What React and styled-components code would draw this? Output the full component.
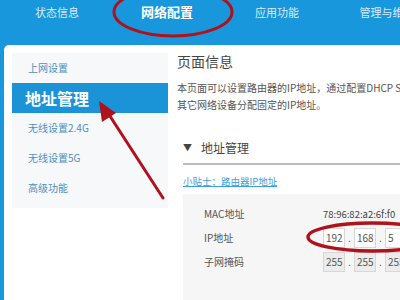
import React from 'react';
import styled, { createGlobalStyle } from 'styled-components';

const Global = createGlobalStyle`
	html, body { margin: 0; padding: 0; }
	body {
		font-family: "Noto Sans CJK SC", "Noto Sans", sans-serif;
		background: #1897dc;
	}
`;

const Page = styled.div`
	position: relative;
	width: 400px;
	height: 300px;
	overflow: hidden;
	background: #1897dc;
	display: flex;
	flex-direction: column;
`;

const Nav = styled.div`
	display: flex;
	height: 45px;
	padding-left: 2px;
	flex-shrink: 0;
`;

const Tab = styled.div`
	width: 110px;
	flex-shrink: 0;
	text-align: center;
	padding-top: 2px;
	line-height: 20px;
	font-size: ${({ active }) => active ? '13px' : '11px'};
	font-weight: ${({ active }) => active ? 'bold' : 'normal'};
	color: ${({ active }) => active ? '#fff' : '#d8ecf8'};
	white-space: nowrap;
`;

const Panel = styled.div`
	flex: 1;
	margin-left: 4px;
	background: #fff;
	border-top-left-radius: 5px;
	display: flex;
	padding: 8px 0 0 8px;
`;

const Sidebar = styled.div`
	width: 156px;
	height: 155px;
	flex-shrink: 0;
	background: #f7f8fa;
	box-sizing: border-box;
`;

const SideItem = styled.div`
	height: 30px;
	line-height: 30px;
	padding-left: ${({ active }) => active ? '13px' : '16px'};
	font-size: ${({ active }) => active ? '16px' : '10px'};
	font-weight: ${({ active }) => active ? 'bold' : 'normal'};
	color: ${({ active }) => active ? '#fff' : '#4f8ec2'};
	background: ${({ active }) => active ? '#1b93d7' : 'transparent'};
`;

const Main = styled.div`
	flex: 1;
	padding-left: 9px;
	min-width: 0;
	display: flex;
	flex-direction: column;
`;

const Title = styled.div`
	font-size: 14px;
	color: #444;
	line-height: 20px;
	margin-top: -2px;
`;

const Para = styled.div`
	font-size: 10px;
	color: #555;
	line-height: 17px;
	margin-top: 8px;
	white-space: nowrap;
`;

const Section = styled.div`
	display: flex;
	align-items: center;
	gap: 9px;
	margin-top: 27px;
	margin-left: 6px;
	font-size: 12px;
	color: #444;
	line-height: 16px;
	& > span:first-child { font-size: 9px; }
`;

const Rule = styled.div`
	height: 2px;
	background: #bdbdbd;
	margin: 7px 0 0 6px;
`;

const Tip = styled.a`
	margin: 9px 0 0 6px;
	font-size: 9.5px;
	color: #3aa0dc;
	text-decoration: underline;
	line-height: 14px;
`;

const InfoBox = styled.div`
	flex: 1;
	margin: 6px 0 0 6px;
	background: #f6f6f6;
	padding: 9px 0 0 21px;
	display: flex;
	flex-direction: column;
	gap: 3px;
`;

const Row = styled.div`
	display: flex;
	align-items: center;
	height: 21px;
	font-size: 10px;
	color: #555;
`;

const Label = styled.div`
	width: 119px;
	flex-shrink: 0;
`;

const Value = styled.div`
	font-size: 9.5px;
	color: #444;
`;

const Octets = styled.div`
	display: flex;
	align-items: center;
`;

const Octet = styled.div`
	width: 22px;
	height: 20px;
	box-sizing: border-box;
	border: 1px solid #d7d7d7;
	background: ${({ disabled }) => disabled ? '#ececec' : '#fff'};
	font-size: 10px;
	line-height: 18px;
	padding-left: 2px;
	color: #555;
`;

const Dot = styled.span`
	width: 9px;
	text-align: center;
	font-size: 10px;
	color: #555;
`;

const Mark = styled.svg`
	position: absolute;
	left: 0;
	top: 0;
	pointer-events: none;
`;

const ip = ['192', '168', '5'];
const mask = ['255', '255', '255'];

export default function App() {
	return (
		<React.Fragment>
			<Global />
			<Page>
				<Nav>
					<Tab>状态信息</Tab>
					<Tab active>网络配置</Tab>
					<Tab>应用功能</Tab>
					<Tab>管理与维护</Tab>
				</Nav>
				<Panel>
					<Sidebar>
						<SideItem>上网设置</SideItem>
						<SideItem active>地址管理</SideItem>
						<SideItem>无线设置2.4G</SideItem>
						<SideItem>无线设置5G</SideItem>
						<SideItem>高级功能</SideItem>
					</Sidebar>
					<Main>
						<Title>页面信息</Title>
						<Para>
							本页面可以设置路由器的IP地址，通过配置DHCP Server，可以为<br />
							其它网络设备分配固定的IP地址。
						</Para>
						<Section><span>▼</span><span>地址管理</span></Section>
						<Rule />
						<Tip>小贴士：路由器IP地址</Tip>
						<InfoBox>
							<Row>
								<Label>MAC地址</Label>
								<Value>78:96:82:a2:6f:f0</Value>
							</Row>
							<Row>
								<Label>IP地址</Label>
								<Octets>
									{ip.map((v, i) => (
										<React.Fragment key={i}>
											{i > 0 && <Dot>.</Dot>}
											<Octet>{v}</Octet>
										</React.Fragment>
									))}
								</Octets>
							</Row>
							<Row>
								<Label>子网掩码</Label>
								<Octets>
									{mask.map((v, i) => (
										<React.Fragment key={i}>
											{i > 0 && <Dot>.</Dot>}
											<Octet disabled>{v}</Octet>
										</React.Fragment>
									))}
								</Octets>
							</Row>
						</InfoBox>
					</Main>
				</Panel>
				<Mark width="400" height="300" viewBox="0 0 400 300">
					<ellipse cx="173" cy="12" rx="59" ry="24" fill="none" stroke="#b0121c" strokeWidth="3" />
					<ellipse cx="372" cy="237" rx="64" ry="14" fill="none" stroke="#b0121c" strokeWidth="3.5" />
					<line x1="163" y1="198" x2="106" y2="110" stroke="#b0121c" strokeWidth="3" strokeLinecap="round" />
					<polygon points="99,101 102,122 116,113" fill="#b0121c" />
				</Mark>
			</Page>
		</React.Fragment>
	);
}
